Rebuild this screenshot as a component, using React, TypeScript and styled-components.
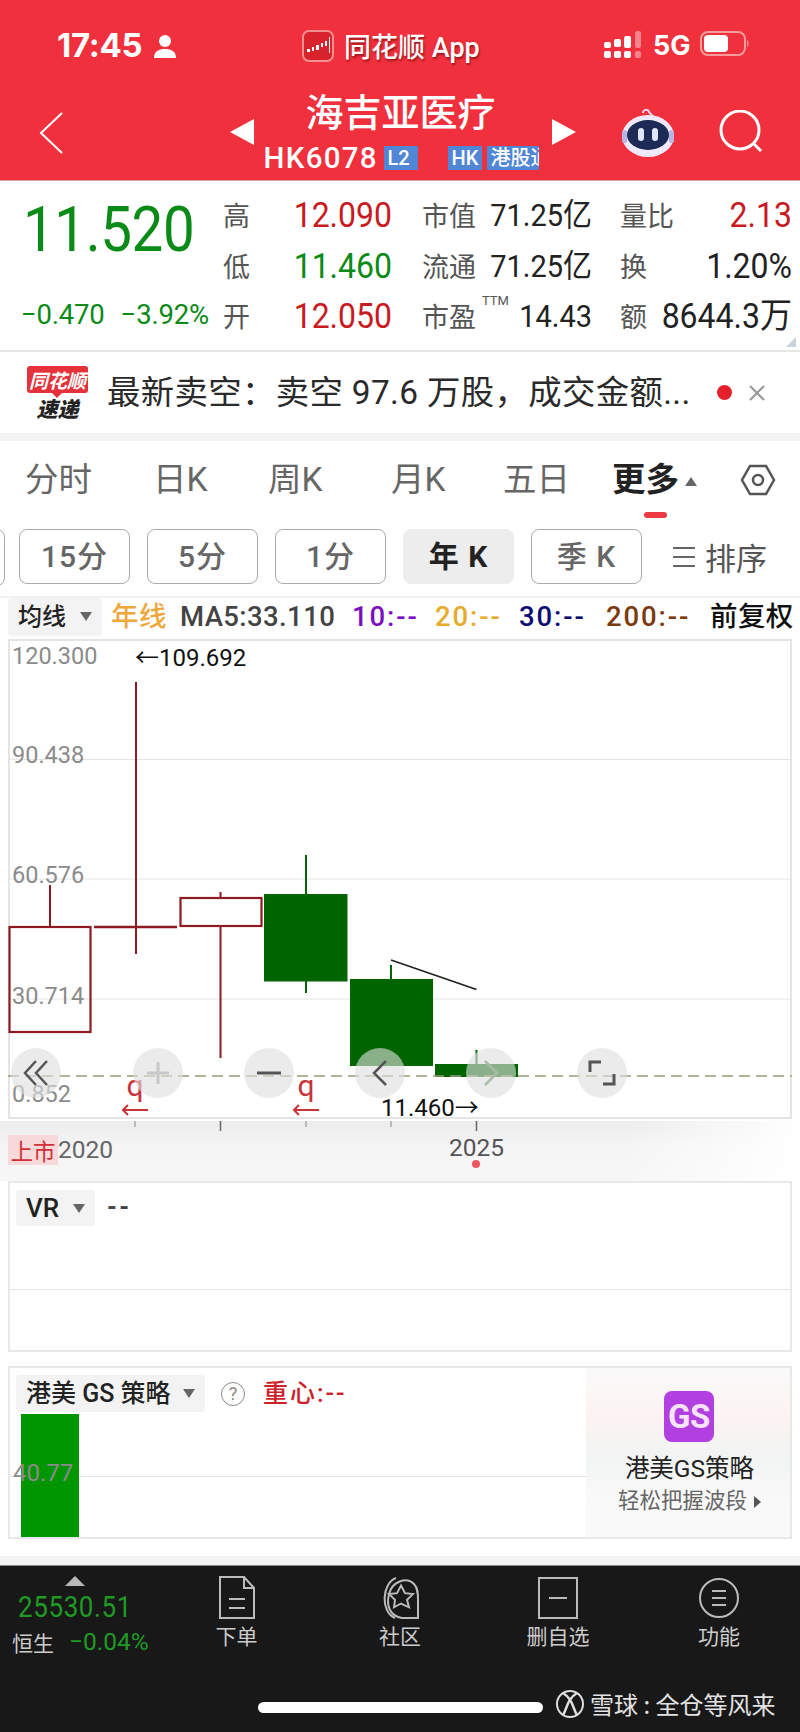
import React from "react";
import styled, { createGlobalStyle } from "styled-components";

const GlobalStyle = createGlobalStyle`
  html, body {
    margin: 0;
    padding: 0;
    background: #fff;
    font-family: Roboto, "Noto Sans CJK SC", sans-serif;
  }
  * { box-sizing: border-box; }
`;

const Page = styled.div`
  width: 800px;
  height: 1732px;
  overflow: hidden;
  display: flex;
  flex-direction: column;
  background: #fff;
`;

/* red header */
const Header = styled.header`
  height: 181px;
  background: #f0303c;
  color: #fff;
  border-bottom: 1px solid #d8a0a0;
`;
const StatusBar = styled.div`
  height: 90px;
  padding-top: 30px;
  display: flex;
  align-items: flex-start;
`;
const Time = styled.div`
  margin-left: 57px;
  width: 96px;
  font: 700 33px/30px Inter, sans-serif;
  letter-spacing: -0.3px;
  white-space: nowrap;
`;
const AppName = styled.div`
  margin-left: 10px;
  width: 134px;
  font: 500 27px/36px Roboto, "Noto Sans CJK SC", sans-serif;
  white-space: nowrap;
  text-shadow: 1px 2px 2px rgba(90, 0, 0, 0.55);
`;
const NetLabel = styled.div`
  font: 700 27px/32px Inter, sans-serif;
  margin: 0 9px 0 11px;
`;
const NavBar = styled.div`
  height: 90px;
  margin-top: -1px;
  display: flex;
`;
const NavLeft = styled.div`
  width: 230px;
  padding: 22px 0 0 38px;
`;
const Tri = styled.div<{ $dir: "left" | "right" }>`
  width: 0;
  height: 0;
  margin-top: 30px;
  border-top: 13px solid transparent;
  border-bottom: 13px solid transparent;
  ${(p) =>
    p.$dir === "left"
      ? "border-right: 24px solid #fff;"
      : "border-left: 24px solid #fff;"}
`;
const TitleBlock = styled.div`
  width: 298px;
  display: flex;
  flex-direction: column;
  align-items: center;
`;
const StockName = styled.div`
  margin: -1px 0 0 -5px;
  font: 500 38px/44px "Noto Sans CJK SC", sans-serif;
`;
const CodeRow = styled.div`
  width: 275px;
  margin-top: 14px;
  display: flex;
  align-items: center;
`;
const Code = styled.span`
  font: 500 29.5px/24px Roboto, sans-serif;
  letter-spacing: 1.3px;
  width: 120px;
  margin-left: -2px;
  white-space: nowrap;
`;
const Tag = styled.span<{ $w: number; $ml?: number }>`
  flex: none;
  display: block;
  width: ${(p) => p.$w}px;
  margin-left: ${(p) => p.$ml ?? 0}px;
  height: 24px;
  background: #4f86d6;
  color: #fff;
  font: 500 20px/24px Roboto, "Noto Sans CJK SC", sans-serif;
  padding-left: 4px;
  white-space: nowrap;
  overflow: hidden;
`;
const NavRight = styled.div`
  flex: 1;
  display: flex;
  align-items: flex-start;
`;

/* quote panel */
const Quote = styled.section`
  height: 171px;
  display: flex;
  border-bottom: 2px solid #e6e6e6;
  position: relative;
`;
const PriceCol = styled.div`
  width: 223px;
  padding-left: 21px;
`;
const BigPrice = styled.div`
  font: 400 56.5px/60px Roboto, sans-serif;
  color: #0a8a16;
  margin: 19px 0 0 2px;
  letter-spacing: -0.4px;
  transform: scaleY(1.12);
  transform-origin: 0 50%;
`;
const ChangeRow = styled.div`
  display: flex;
  gap: 16px;
  margin-top: 40px;
  color: #0a8a16;
  font: 400 27.5px/30px Roboto, sans-serif;
  letter-spacing: -0.2px;
  white-space: nowrap;
`;
const StatsGrid = styled.div`
  display: grid;
  grid-template-columns: 199px 198px 180px;
  grid-auto-rows: 50.5px;
  padding-top: 9px;
`;
const StatCell = styled.div<{ $pr: number }>`
  display: flex;
  justify-content: space-between;
  align-items: center;
  padding-right: ${(p) => p.$pr}px;
  white-space: nowrap;
`;
const StatLabel = styled.span`
  font: 400 27px/36px "Noto Sans CJK SC", sans-serif;
  color: #555;
  position: relative;
`;
const Ttm = styled.sup`
  position: absolute;
  left: 60px;
  top: -4px;
  font: 400 13px/14px Roboto, sans-serif;
  color: #555;
`;
const StatValue = styled.span<{ $color?: string; $size?: number }>`
  font: 400 ${(p) => p.$size ?? 29}px/36px Roboto, "Noto Sans CJK SC", sans-serif;
  color: ${(p) => p.$color ?? "#222"};
  display: inline-block;
  transform: scaleY(1.1);
`;
const CornerMark = styled.div`
  position: absolute;
  right: 4px;
  bottom: 3px;
  width: 0;
  height: 0;
  border-left: 10px solid transparent;
  border-bottom: 10px solid #c9d2da;
`;

/* news ticker */
const News = styled.section`
  height: 81px;
  display: flex;
  align-items: center;
  padding-left: 27px;
  background: #fff;
`;
const NewsLogo = styled.div`
  width: 61px;
  margin-top: -1px;
  display: flex;
  flex-direction: column;
  align-items: center;
`;
const NewsBubble = styled.div`
  width: 61px;
  height: 27px;
  border-radius: 3px;
  background: #e4313a;
  color: #fff;
  text-align: center;
  font: italic 700 19px/27px "Noto Sans CJK SC", sans-serif;
  position: relative;
  &::after {
    content: "";
    position: absolute;
    left: 25px;
    bottom: -5px;
    border-left: 5px solid transparent;
    border-right: 5px solid transparent;
    border-top: 5px solid #e4313a;
  }
`;
const NewsSub = styled.div`
  margin-top: 4px;
  font: italic 900 21px/22px "Noto Sans CJK SC", sans-serif;
  color: #222;
`;
const NewsText = styled.div`
  width: 583px;
  margin-left: 19px;
  font: 400 33.4px/44px Roboto, "Noto Sans CJK SC", sans-serif;
  letter-spacing: 0.35px;
  color: #2a2a2a;
  white-space: nowrap;
  overflow: hidden;
`;
const RedDot = styled.span`
  width: 15px;
  height: 15px;
  border-radius: 50%;
  background: #e4202c;
  margin-left: 27px;
`;
const Strip = styled.div`
  height: 8px;
  background: #f4f4f4;
`;

/* period tabs */
const Tabs = styled.nav`
  height: 81px;
  display: flex;
  position: relative;
  padding: 15px 0 0 25px;
`;
const Tab = styled.div<{ $w: number; $active?: boolean }>`
  flex: none;
  width: ${(p) => p.$w}px;
  font: ${(p) => (p.$active ? 700 : 400)} 33.5px/48px Roboto, "Noto Sans CJK SC", sans-serif;
  color: ${(p) => (p.$active ? "#222" : "#666")};
  white-space: nowrap;
`;
const TabCaret = styled.span`
  display: inline-block;
  margin-left: 6px;
  vertical-align: 5px;
  border-left: 6px solid transparent;
  border-right: 6px solid transparent;
  border-bottom: 9px solid #666;
`;
const TabMark = styled.div`
  position: absolute;
  left: 644px;
  top: 71px;
  width: 23px;
  height: 6px;
  border-radius: 3px;
  background: #ee3a42;
`;

const Periods = styled.div`
  height: 69px;
  margin-top: 7px;
  padding-left: 19px;
  display: flex;
  gap: 17px;
  align-items: flex-start;
  position: relative;
  border-bottom: 2px solid #f0f0f0;
  &::before {
    content: "";
    position: absolute;
    left: -108px;
    top: 0;
    width: 111px;
    height: 55px;
    border: 1px solid #aaa;
    border-radius: 8px;
  }
`;
const PeriodBtn = styled.div<{ $active?: boolean }>`
  width: 111px;
  height: 55px;
  border-radius: 8px;
  border: 1px solid ${(p) => (p.$active ? "#ededed" : "#aaa")};
  background: ${(p) => (p.$active ? "#ededed" : "#fff")};
  color: ${(p) => (p.$active ? "#222" : "#666")};
  font: ${(p) => (p.$active ? 700 : 500)} 30px/53px Roboto, "Noto Sans CJK SC", sans-serif;
  text-align: center;
  letter-spacing: 1px;
`;
const SortBtn = styled.div`
  margin-left: 14px;
  display: flex;
  align-items: center;
  gap: 10px;
  height: 55px;
  font: 400 31px/55px "Noto Sans CJK SC", sans-serif;
  color: #555;
`;

/* moving average legend */
const MaRow = styled.div`
  height: 37px;
  padding-left: 8px;
  display: flex;
  align-items: center;
  white-space: nowrap;
`;
const Picker = styled.div<{ $w: number; $h: number; $size?: number }>`
  flex: none;
  width: ${(p) => p.$w}px;
  height: ${(p) => p.$h}px;
  background: #f3f3f3;
  border-radius: 4px;
  display: flex;
  align-items: center;
  justify-content: space-between;
  padding: 0 10px;
  font: 500 ${(p) => p.$size ?? 24}px/30px Roboto, "Noto Sans CJK SC", sans-serif;
  color: #222;
  white-space: nowrap;
`;
const Caret = styled.span`
  border-left: 6px solid transparent;
  border-right: 6px solid transparent;
  border-top: 9px solid #666;
`;
const MaItem = styled.span<{ $color: string; $w: number }>`
  flex: none;
  width: ${(p) => p.$w}px;
  color: ${(p) => p.$color};
  font: 500 27.5px/32px Roboto, "Noto Sans CJK SC", sans-serif;
  letter-spacing: 1.9px;
`;
const MaName = styled(MaItem)`
  letter-spacing: 0.4px;
`;

/* chart */
const ChartBox = styled.div`
  position: relative;
  height: 482px;
  margin: 4px 8px 0;
`;
const ChartSvg = styled.svg`
  display: block;
  font-family: Roboto, "Noto Sans CJK SC", sans-serif;
`;
const ToolStrip = styled.div`
  position: absolute;
  left: 3px;
  top: 409px;
  display: flex;
  gap: 61px;
`;
const RoundBtn = styled.div<{ $first?: boolean }>`
  width: 50px;
  height: 50px;
  border-radius: 50%;
  background: rgba(222, 222, 222, 0.62);
  margin-right: ${(p) => (p.$first ? 11 : 0)}px;
  display: flex;
  align-items: center;
  justify-content: center;
`;
const AxisBand = styled.div`
  position: relative;
  height: 60px;
  background: linear-gradient(90deg, rgba(255, 255, 255, 0) 78%, #fff 100%),
    linear-gradient(180deg, #ececec 0, #f5f5f5 45%, #f7f7f7 100%);
  display: flex;
  padding: 14px 0 0 8px;
`;
const ListedTag = styled.span`
  width: 50px;
  height: 30px;
  background: #f7d9da;
  color: #d03038;
  text-align: center;
  font: 400 22.5px/30px "Noto Sans CJK SC", sans-serif;
`;
const YearLabel = styled.span`
  font: 400 24.5px/30px Roboto, sans-serif;
  color: #666;
`;
const Year2025 = styled(YearLabel)`
  position: absolute;
  left: 449px;
  top: 12px;
  color: #555;
`;
const YearDot = styled.span`
  position: absolute;
  left: 472px;
  top: 39px;
  width: 8px;
  height: 8px;
  border-radius: 50%;
  background: #ee5560;
`;

/* indicator panels */
const Panel = styled.section<{ $h: number; $mt?: number }>`
  position: relative;
  height: ${(p) => p.$h}px;
  margin: ${(p) => p.$mt ?? 0}px 8px 0;
  border: 2px solid #e8e8e8;
  display: flex;
  overflow: hidden;
`;
const GridLine = styled.div<{ $top: number }>`
  position: absolute;
  left: 0;
  right: 0;
  top: ${(p) => p.$top}px;
  height: 1px;
  background: #e4e4e4;
`;
const PanelHead = styled.div`
  position: absolute;
  left: 6px;
  top: 7px;
  display: flex;
  align-items: center;
  z-index: 2;
`;
const DashText = styled.span`
  margin-left: 12px;
  font: 700 25px/30px Roboto, sans-serif;
  letter-spacing: 2.5px;
  color: #444;
`;
const HelpMark = styled.span`
  width: 24px;
  height: 24px;
  margin-left: 16px;
  border-radius: 50%;
  border: 1.5px solid #888;
  color: #888;
  text-align: center;
  font: 400 18px/21px Roboto, sans-serif;
`;
const CenterText = styled.span`
  margin-left: 18px;
  color: #cc2229;
  font: 500 25px/30px Roboto, "Noto Sans CJK SC", sans-serif;
  letter-spacing: 2px;
`;
const GsBar = styled.div`
  position: absolute;
  left: 11px;
  top: 46px;
  bottom: 0;
  width: 58px;
  background: #009600;
`;
const GsValue = styled.div`
  position: absolute;
  left: 3px;
  top: 90px;
  font: 400 24px/30px Roboto, sans-serif;
  color: #8b8b8b;
`;
const GsPromo = styled.aside`
  position: absolute;
  right: 0;
  top: 0;
  bottom: 0;
  width: 204px;
  padding-top: 23px;
  background: linear-gradient(180deg, #fafafa 0, #fcf3f2 28%, #f1f4f3 52%, #f9f9f9 78%);
  display: flex;
  flex-direction: column;
  align-items: center;
`;
const GsLogo = styled.div`
  width: 50px;
  height: 51px;
  border-radius: 8px;
  margin-left: 2px;
  background: #b23fe0;
  color: #f7e3fb;
  text-align: center;
  font: 700 33px/51px Roboto, sans-serif;
  letter-spacing: -0.5px;
`;
const PromoTitle = styled.div`
  margin: 11px 0 0 3px;
  font: 400 24.5px/32px Roboto, "Noto Sans CJK SC", sans-serif;
  color: #222;
`;
const PromoSub = styled.div`
  margin: -2px 0 0 3px;
  font: 400 21.5px/32px "Noto Sans CJK SC", sans-serif;
  color: #666;
  white-space: nowrap;
`;
const PromoCaret = styled.span`
  display: inline-block;
  margin-left: 7px;
  border-top: 6px solid transparent;
  border-bottom: 6px solid transparent;
  border-left: 7px solid #555;
`;

/* bottom bar */
const BottomGap = styled.div`
  flex: none;
  height: 9px;
  margin-top: 17px;
  background: #f4f4f4;
`;
const Footer = styled.footer`
  flex: 1;
  background: #181818;
  border-top: 1px solid #888;
  display: flex;
  flex-direction: column;
`;
const FooterTop = styled.div`
  height: 126px;
  display: flex;
`;
const IndexBox = styled.div`
  flex: none;
  width: 155.5px;
  padding: 10px 0 0 12px;
`;
const UpMark = styled.div`
  width: 0;
  margin-left: 53px;
  border-left: 10px solid transparent;
  border-right: 10px solid transparent;
  border-bottom: 10px solid #b8b8b8;
`;
const IndexValue = styled.div`
  margin: 5px 0 0 6px;
  font: 400 26px/32px Roboto, sans-serif;
  letter-spacing: 0.6px;
  color: #1f9b24;
  transform: scaleY(1.1);
`;
const IndexRow = styled.div`
  margin-top: 3px;
  display: flex;
  align-items: center;
  white-space: nowrap;
`;
const IndexName = styled.span`
  width: 57px;
  font: 400 21px/32px "Noto Sans CJK SC", sans-serif;
  color: #ccc;
`;
const IndexChange = styled.span`
  font: 400 24.5px/32px Roboto, sans-serif;
  color: #1f9b24;
`;
const FootNav = styled.div`
  flex: 1;
  display: grid;
  grid-template-columns: 162px 165px 151px 171px;
`;
const FootItem = styled.div`
  display: flex;
  flex-direction: column;
  align-items: center;
  padding-top: 10px;
  color: #ccc;
  font: 400 21px/30px "Noto Sans CJK SC", sans-serif;
  white-space: nowrap;
`;
const FootIcon = styled.svg`
  display: block;
  height: 44px;
  width: 48px;
`;
const FooterBottom = styled.div`
  display: flex;
  align-items: center;
  padding-left: 258px;
`;
const HomeBar = styled.div`
  width: 285px;
  height: 11px;
  margin-top: 3px;
  border-radius: 6px;
  background: #fff;
`;
const Watermark = styled.div`
  margin-left: 12px;
  display: flex;
  align-items: center;
  gap: 5px;
  margin-top: -4px;
  color: #e2e2e2;
  font: 400 24px/32px "Noto Sans CJK SC", sans-serif;
  white-space: nowrap;
`;

const RED = "#c81a22";
const GREEN = "#0a8a16";
const CANDLE_RED = "#8c1a20";
const CANDLE_GREEN = "#006400";

const stats = [
  { label: "高", value: "12.090", color: RED, size: 32 },
  { label: "市值", value: "71.25亿" },
  { label: "量比", value: "2.13", color: RED, size: 32 },
  { label: "低", value: "11.460", color: GREEN, size: 32 },
  { label: "流通", value: "71.25亿" },
  { label: "换", value: "1.20%", size: 32 },
  { label: "开", value: "12.050", color: RED, size: 32 },
  { label: "市盈", value: "14.43", ttm: true },
  { label: "额", value: "8644.3万", size: 32 },
];
const padRight = [30, 28, 8];

const tabs = [
  { t: "分时", w: 128 },
  { t: "日K", w: 115 },
  { t: "周K", w: 123 },
  { t: "月K", w: 112 },
  { t: "五日", w: 109 },
];

const periods = ["15分", "5分", "1分", "年 K", "季 K"];

const maItems = [
  { t: "MA5:33.110", c: "#444", w: 172, name: true },
  { t: "10:--", c: "#7b0fc0", w: 83 },
  { t: "20:--", c: "#e6ab2b", w: 84 },
  { t: "30:--", c: "#0c0c72", w: 87 },
  { t: "200:--", c: "#7c3a0e", w: 104 },
  { t: "前复权", c: "#111", w: 84, name: true },
];

// page coordinates, the svg viewBox starts at the chart's corner
const redBoxes = [
  { x: 9.5, y: 927, w: 81, h: 105 },
  { x: 180.5, y: 898, w: 81, h: 28 },
];
const greenBoxes = [
  { x: 264, y: 894, w: 83.5, h: 87.5 },
  { x: 350, y: 979, w: 83, h: 87 },
  { x: 435, y: 1064, w: 83, h: 13 },
];
const wicks = [
  { x: 50, a: 885, b: 927, c: CANDLE_RED },
  { x: 136, a: 682, b: 954, c: CANDLE_RED },
  { x: 220.5, a: 892, b: 898, c: CANDLE_RED },
  { x: 220.5, a: 926, b: 1058, c: CANDLE_RED },
  { x: 306, a: 855, b: 894, c: CANDLE_GREEN },
  { x: 306, a: 981, b: 993, c: CANDLE_GREEN },
  { x: 391, a: 965, b: 979, c: CANDLE_GREEN },
  { x: 476.5, a: 1050, b: 1064, c: CANDLE_GREEN },
];
const yLabels = [
  { t: "120.300", y: 664 },
  { t: "90.438", y: 763 },
  { t: "60.576", y: 883 },
  { t: "30.714", y: 1004 },
  { t: "0.852", y: 1102 },
];
const ticks = [
  { x: 135, h: 6 },
  { x: 220.5, h: 10 },
  { x: 306, h: 6 },
  { x: 391, h: 6 },
  { x: 476.5, h: 10 },
];

const Chart = () => (
  <ChartSvg width={784} height={482} viewBox="8 639 784 482">
    <rect x={9} y={640} width={782} height={478} fill="#fff" stroke="#e4e4e4" strokeWidth={2} />
    {[759.5, 879, 999].map((y) => (
      <line key={y} x1={9} x2={791} y1={y} y2={y} stroke="#e4e4e4" />
    ))}
    {wicks.map((w, i) => (
      <line key={i} x1={w.x} x2={w.x} y1={w.a} y2={w.b} stroke={w.c} strokeWidth={2} />
    ))}
    {redBoxes.map((b) => (
      <rect key={b.x} x={b.x} y={b.y} width={b.w} height={b.h} fill="none" stroke={CANDLE_RED} strokeWidth={2.2} />
    ))}
    <line x1={94} x2={177} y1={927} y2={927} stroke={CANDLE_RED} strokeWidth={2.6} />
    {greenBoxes.map((b) => (
      <rect key={b.x} x={b.x} y={b.y} width={b.w} height={b.h} fill={CANDLE_GREEN} />
    ))}
    <line x1={391} y1={960} x2={476.5} y2={989.5} stroke="#222" strokeWidth={1.8} />
    <line x1={8} x2={792} y1={1076} y2={1076} stroke="#9a9a78" strokeWidth={1.3} strokeDasharray="11 6" />
    {yLabels.map((l) => (
      <text key={l.t} x={12} y={l.y} fontSize={23.5} fill="#8b8b8b">
        {l.t}
      </text>
    ))}
    <text x={135} y={666} fontSize={24} fill="#111">
      <tspan fontFamily='"Noto Sans CJK SC"'>←</tspan>109.692
    </text>
    <text x={381} y={1116} fontSize={24} fill="#111">
      11.460<tspan fontFamily='"Noto Sans CJK SC"'>→</tspan>
    </text>
    {[135, 306].map((x) => (
      <g key={x}>
        <text x={x} y={1096} fontSize={30} fill="#c8323a" textAnchor="middle">
          q
        </text>
        <path d={`M${x + 13} 1110H${x - 12}M${x - 7} 1105l-5 5 5 5`} fill="none" stroke="#c8323a" strokeWidth={2} />
      </g>
    ))}
  </ChartSvg>
);

const stroke = { fill: "none", stroke: "#555", strokeWidth: 3 };

const App = () => {
  return (
    <Page>
      <GlobalStyle />
      <Header>
        <StatusBar>
          <Time>17:45</Time>
          <svg width={24} height={24} viewBox="0 0 24 24" style={{ marginTop: 4 }}>
            <circle cx={12} cy={7} r={6} fill="#fff" />
            <path d="M1 24c0-7 5-9 11-9s11 2 11 9z" fill="#fff" />
          </svg>
          <svg width={32} height={32} viewBox="0 0 32 32" style={{ marginLeft: 125 }}>
            <rect x={1} y={1} width={30} height={30} rx={6} fill="#d9232c" stroke="#f5908f" strokeWidth={2} />
            <path d="M5 19h3v3H5zM10 17h2v4h-2zM14 15h3v5h-3zM19 13h2v4h-2zM23 11h2v5h-2zM27 7h1v16h-1z" fill="#fff" />
          </svg>
          <AppName>同花顺 App</AppName>
          <svg width={38} height={28} viewBox="0 0 38 28" style={{ marginLeft: 126, marginTop: 1 }}>
            <g fill="#fff">
              <rect x={0} y={11} width={7} height={6} rx={2} />
              <rect x={10} y={8} width={7} height={8} rx={2} />
              <rect x={20} y={5} width={7} height={12} rx={2} />
              <rect x={0} y={20} width={7} height={7} rx={2} />
              <rect x={10} y={20} width={7} height={7} rx={2} />
              <rect x={20} y={20} width={7} height={7} rx={2} />
            </g>
            <g fill="#fff" opacity={0.4}>
              <rect x={31} y={0} width={6} height={17} rx={2} />
              <rect x={31} y={20} width={6} height={7} rx={2} />
            </g>
          </svg>
          <NetLabel>5G</NetLabel>
          <svg width={50} height={26} viewBox="0 0 50 26" style={{ marginTop: 1 }}>
            <rect x={1} y={1} width={44} height={23} rx={7} fill="none" stroke="#f79b9b" strokeWidth={2} />
            <rect x={4} y={4} width={24} height={17} rx={4} fill="#fff" />
            <path d="M47 9c2 1 2 6 0 7z" fill="#f79b9b" />
          </svg>
        </StatusBar>
        <NavBar>
          <NavLeft>
            <svg width={26} height={44} viewBox="0 0 26 44">
              <path d="M24 2L3 22l21 20" fill="none" stroke="#fff" strokeWidth={2} />
            </svg>
          </NavLeft>
          <Tri $dir="left" />
          <TitleBlock>
            <StockName>海吉亚医疗</StockName>
            <CodeRow>
              <Code>HK6078</Code>
              <Tag $w={34}>L2</Tag>
              <Tag $w={34} $ml={30}>
                HK
              </Tag>
              <Tag $w={52} $ml={5}>
                港股通
              </Tag>
            </CodeRow>
          </TitleBlock>
          <Tri $dir="right" />
          <NavRight>
            <svg width={54} height={50} viewBox="0 0 54 50" style={{ marginLeft: 45, marginTop: 18 }}>
              <path d="M22 6c0-4 5-4 6-1 1 2 3 3 5 5" fill="none" stroke="#e9d8f0" strokeWidth={2} />
              <ellipse cx={27} cy={29} rx={26} ry={21} fill="#eeeafc" />
              <rect x={1} y={23} width={5} height={13} rx={2.5} fill="#b9b3ea" />
              <rect x={48} y={23} width={5} height={13} rx={2.5} fill="#b9b3ea" />
              <ellipse cx={27} cy={28} rx={21} ry={15} fill="#1d2a55" />
              <rect x={17} y={21} width={6} height={13} rx={3} fill="#dfe6f7" />
              <rect x={31} y={21} width={6} height={13} rx={3} fill="#dfe6f7" />
            </svg>
            <svg width={46} height={44} viewBox="0 0 46 44" style={{ marginLeft: 44, marginTop: 21 }}>
              <circle cx={21} cy={20} r={19} fill="none" stroke="#fff" strokeWidth={3} />
              <path d="M34 33l8 8" fill="none" stroke="#fff" strokeWidth={3} />
            </svg>
          </NavRight>
        </NavBar>
      </Header>

      <Quote>
        <PriceCol>
          <BigPrice>11.520</BigPrice>
          <ChangeRow>
            <span>−0.470</span>
            <span>−3.92%</span>
          </ChangeRow>
        </PriceCol>
        <StatsGrid>
          {stats.map((s, i) => (
            <StatCell key={s.label} $pr={padRight[i % 3]}>
              <StatLabel>
                {s.label}
                {s.ttm && <Ttm>TTM</Ttm>}
              </StatLabel>
              <StatValue $color={s.color} $size={s.size}>
                {s.value}
              </StatValue>
            </StatCell>
          ))}
        </StatsGrid>
        <CornerMark />
      </Quote>

      <News>
        <NewsLogo>
          <NewsBubble>同花顺</NewsBubble>
          <NewsSub>速递</NewsSub>
        </NewsLogo>
        <NewsText>最新卖空：卖空 97.6 万股，成交金额...</NewsText>
        <RedDot />
        <svg width={16} height={16} viewBox="0 0 16 16" style={{ marginLeft: 17 }}>
          <path d="M1 1l14 14M15 1L1 15" stroke="#999" strokeWidth={2.2} />
        </svg>
      </News>
      <Strip />

      <Tabs>
        {tabs.map((t) => (
          <Tab key={t.t} $w={t.w}>
            {t.t}
          </Tab>
        ))}
        <Tab $w={128} $active>
          更多
          <TabCaret />
        </Tab>
        <svg width={36} height={32} viewBox="0 0 36 32" style={{ marginTop: 8 }}>
          <path d="M10 2h16l8 14-8 14H10L2 16z" fill="none" stroke="#555" strokeWidth={2.5} />
          <circle cx={18} cy={16} r={5} fill="none" stroke="#555" strokeWidth={2.5} />
        </svg>
        <TabMark />
      </Tabs>

      <Periods>
        {periods.map((p, i) => (
          <PeriodBtn key={p} $active={i === 3}>
            {p}
          </PeriodBtn>
        ))}
        <SortBtn>
          <svg width={22} height={22} viewBox="0 0 22 22">
            <path d="M0 2h22M0 11h22M0 20h22" stroke="#666" strokeWidth={2} />
          </svg>
          排序
        </SortBtn>
      </Periods>

      <MaRow>
        <Picker $w={94} $h={38} style={{ marginRight: 9 }}>
          均线
          <Caret />
        </Picker>
        <MaName $color="#eda73a" $w={69}>
          年线
        </MaName>
        {maItems.map((m) =>
          m.name ? (
            <MaName key={m.t} $color={m.c} $w={m.w}>
              {m.t}
            </MaName>
          ) : (
            <MaItem key={m.t} $color={m.c} $w={m.w}>
              {m.t}
            </MaItem>
          )
        )}
      </MaRow>

      <ChartBox>
        <Chart />
        <ToolStrip>
          <RoundBtn $first>
            <svg width={26} height={26} viewBox="0 0 26 26">
              <path d="M13 1L2 13l11 12M24 1L13 13l11 12" {...stroke} strokeWidth={2.5} />
            </svg>
          </RoundBtn>
          <RoundBtn>
            <svg width={24} height={24} viewBox="0 0 24 24">
              <path d="M12 1v22M1 12h22" fill="none" stroke="#c8c8c8" strokeWidth={3} />
            </svg>
          </RoundBtn>
          <RoundBtn>
            <svg width={24} height={6} viewBox="0 0 24 6">
              <path d="M0 3h24" {...stroke} />
            </svg>
          </RoundBtn>
          <RoundBtn>
            <svg width={16} height={26} viewBox="0 0 16 26">
              <path d="M14 1L2 13l12 12" {...stroke} strokeWidth={2.5} />
            </svg>
          </RoundBtn>
          <RoundBtn>
            <svg width={16} height={26} viewBox="0 0 16 26">
              <path d="M2 1l12 12L2 25" fill="none" stroke="#a9bba9" strokeWidth={2.5} />
            </svg>
          </RoundBtn>
          <RoundBtn>
            <svg width={28} height={26} viewBox="0 0 28 26">
              <path d="M2 12V2h11M26 14v10H15" {...stroke} />
            </svg>
          </RoundBtn>
        </ToolStrip>
      </ChartBox>

      <AxisBand>
        <svg width={784} height={12} viewBox="8 1120 784 12" style={{ position: "absolute", left: 8, top: 0 }}>
          {ticks.map((t) => (
            <line key={t.x} x1={t.x} x2={t.x} y1={1120} y2={1120 + t.h} stroke={t.h > 6 ? "#666" : "#aaa"} strokeWidth={1.5} />
          ))}
        </svg>
        <ListedTag>上市</ListedTag>
        <YearLabel>2020</YearLabel>
        <Year2025>2025</Year2025>
        <YearDot />
      </AxisBand>

      <Panel $h={171}>
        <GridLine $top={106} />
        <PanelHead>
          <Picker $w={79} $h={36} $size={26}>
            VR
            <Caret />
          </Picker>
          <DashText>--</DashText>
        </PanelHead>
      </Panel>

      <Panel $h={173} $mt={14}>
        <GridLine $top={108} />
        <PanelHead>
          <Picker $w={189} $h={37} $size={25}>
            港美 GS 策略
            <Caret />
          </Picker>
          <HelpMark>?</HelpMark>
          <CenterText>重心:--</CenterText>
        </PanelHead>
        <GsBar />
        <GsValue>40.77</GsValue>
        <GsPromo>
          <GsLogo>GS</GsLogo>
          <PromoTitle>港美GS策略</PromoTitle>
          <PromoSub>
            轻松把握波段
            <PromoCaret />
          </PromoSub>
        </GsPromo>
      </Panel>

      <BottomGap />
      <Footer>
        <FooterTop>
          <IndexBox>
            <UpMark />
            <IndexValue>25530.51</IndexValue>
            <IndexRow>
              <IndexName>恒生</IndexName>
              <IndexChange>−0.04%</IndexChange>
            </IndexRow>
          </IndexBox>
          <FootNav>
            <FootItem>
              <FootIcon viewBox="0 0 48 44">
                <path d="M7 1h24l10 11v30H7zM31 1v11h10M16 23h16M16 32h16" fill="none" stroke="#bbb" strokeWidth={2} />
              </FootIcon>
              下单
            </FootItem>
            <FootItem>
              <FootIcon viewBox="0 0 48 44">
                <path d="M20 2C6 7 4 36 19 42M42 42H26C14 40 10 30 13 18 16 6 30 0 38 8c4 4 4 10 4 16z" fill="none" stroke="#bbb" strokeWidth={2} />
                <path d="M28 10l4 8 8 1-6 6 2 8-8-4-7 4 1-8-6-6 8-1z" fill="none" stroke="#bbb" strokeWidth={2} transform="translate(-3 0) scale(1 .95)" />
              </FootIcon>
              社区
            </FootItem>
            <FootItem>
              <FootIcon viewBox="0 0 48 44">
                <path d="M5 2h38v40H5zM15 22h18" fill="none" stroke="#bbb" strokeWidth={2} />
              </FootIcon>
              删自选
            </FootItem>
            <FootItem>
              <FootIcon viewBox="0 0 48 44">
                <circle cx={24} cy={22} r={19} fill="none" stroke="#bbb" strokeWidth={2} />
                <path d="M17 15h14M17 22h14M17 29h14" fill="none" stroke="#bbb" strokeWidth={2} />
              </FootIcon>
              功能
            </FootItem>
          </FootNav>
        </FooterTop>
        <FooterBottom>
          <HomeBar />
          <Watermark>
            <svg width={30} height={30} viewBox="0 0 30 30">
              <circle cx={15} cy={15} r={13} fill="none" stroke="#ddd" strokeWidth={2} />
              <path d="M8 4c10 6 10 16 14 22M22 4C12 10 12 20 8 26" fill="none" stroke="#ddd" strokeWidth={2.5} />
            </svg>
            雪球 : 全仓等风来
          </Watermark>
        </FooterBottom>
      </Footer>
    </Page>
  );
};

export default App;
